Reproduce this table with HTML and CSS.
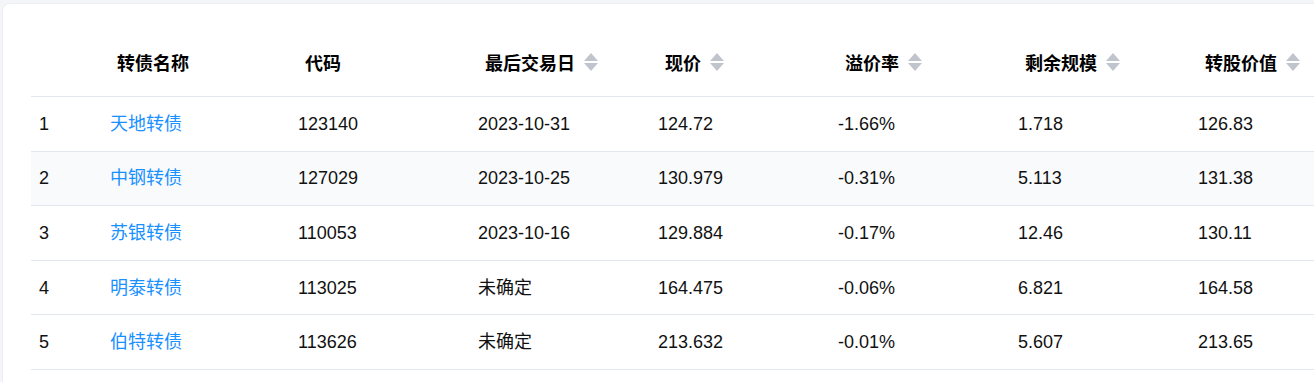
FILE: index.html
```html
<!DOCTYPE html>
<html lang="zh">
<head>
<meta charset="utf-8">
<title>转债列表</title>
<link rel="stylesheet" href="styles.css">
</head>
<body>
<div class="card">
  <table class="bond-table">
    <colgroup>
      <col class="c-idx"><col class="c-name"><col class="c-std"><col class="c-std"><col class="c-std"><col class="c-std"><col class="c-std"><col class="c-std">
    </colgroup>
    <thead>
      <tr>
        <th></th>
        <th>转债名称</th>
        <th>代码</th>
        <th><span class="th-in">最后交易日<span class="sort"><i class="up"></i><i class="down"></i></span></span></th>
        <th><span class="th-in">现价<span class="sort"><i class="up"></i><i class="down"></i></span></span></th>
        <th><span class="th-in">溢价率<span class="sort"><i class="up"></i><i class="down"></i></span></span></th>
        <th><span class="th-in">剩余规模<span class="sort"><i class="up"></i><i class="down"></i></span></span></th>
        <th><span class="th-in">转股价值<span class="sort"><i class="up"></i><i class="down"></i></span></span></th>
      </tr>
    </thead>
    <tbody>
      <tr><td>1</td><td><a class="link">天地转债</a></td><td>123140</td><td>2023-10-31</td><td>124.72</td><td>-1.66%</td><td>1.718</td><td>126.83</td></tr>
      <tr class="stripe"><td>2</td><td><a class="link">中钢转债</a></td><td>127029</td><td>2023-10-25</td><td>130.979</td><td>-0.31%</td><td>5.113</td><td>131.38</td></tr>
      <tr><td>3</td><td><a class="link">苏银转债</a></td><td>110053</td><td>2023-10-16</td><td>129.884</td><td>-0.17%</td><td>12.46</td><td>130.11</td></tr>
      <tr><td>4</td><td><a class="link">明泰转债</a></td><td>113025</td><td>未确定</td><td>164.475</td><td>-0.06%</td><td>6.821</td><td>164.58</td></tr>
      <tr><td>5</td><td><a class="link">伯特转债</a></td><td>113626</td><td>未确定</td><td>213.632</td><td>-0.01%</td><td>5.607</td><td>213.65</td></tr>
    </tbody>
  </table>
</div>
</body>
</html>
```
FILE: styles.css
```css
html, body {
  margin: 0;
  padding: 0;
  overflow: hidden;
  background: #f4f5f8;
  font-family: "Liberation Sans", Arial, "Noto Sans CJK SC", sans-serif;
  color: #111;
}
.card {
  margin: 3px 0 0 2px;
  width: 1340px;
  height: 420px;
  background: #fff;
  border: 1px solid #eceef3;
  border-radius: 8px;
  padding: 23px 0 0 28px;
}
.bond-table {
  border-collapse: collapse;
  table-layout: fixed;
  width: 1339px;
  font-size: 18px;
}
.c-idx { width: 71px; }
.c-name { width: 188px; }
.c-std { width: 180px; }
.bond-table th {
  height: 69px;
  padding: 0 0 0 15px;
  text-align: left;
  font-weight: bold;
  color: #000;
  border-bottom: 1px solid #e2e6ee;
  vertical-align: middle;
  white-space: nowrap;
}
.th-in {
  display: inline-flex;
  align-items: center;
  gap: 9px;
}
.sort {
  display: inline-flex;
  flex-direction: column;
  gap: 2px;
}
.sort i {
  display: block;
  width: 0;
  height: 0;
  border-left: 7px solid transparent;
  border-right: 7px solid transparent;
}
.sort .up { border-bottom: 8px solid #c0c4cc; }
.sort .down { border-top: 8px solid #c0c4cc; }
.bond-table td {
  height: 54.6px;
  box-sizing: border-box;
  padding: 0 8px;
  line-height: 22px;
  border-bottom: 1px solid #e2e6ee;
  vertical-align: middle;
  white-space: nowrap;
}
.bond-table tr.stripe td { background: #f9fafc; }
.link {
  color: #1890ff;
  text-decoration: none;
  cursor: pointer;
}
```
